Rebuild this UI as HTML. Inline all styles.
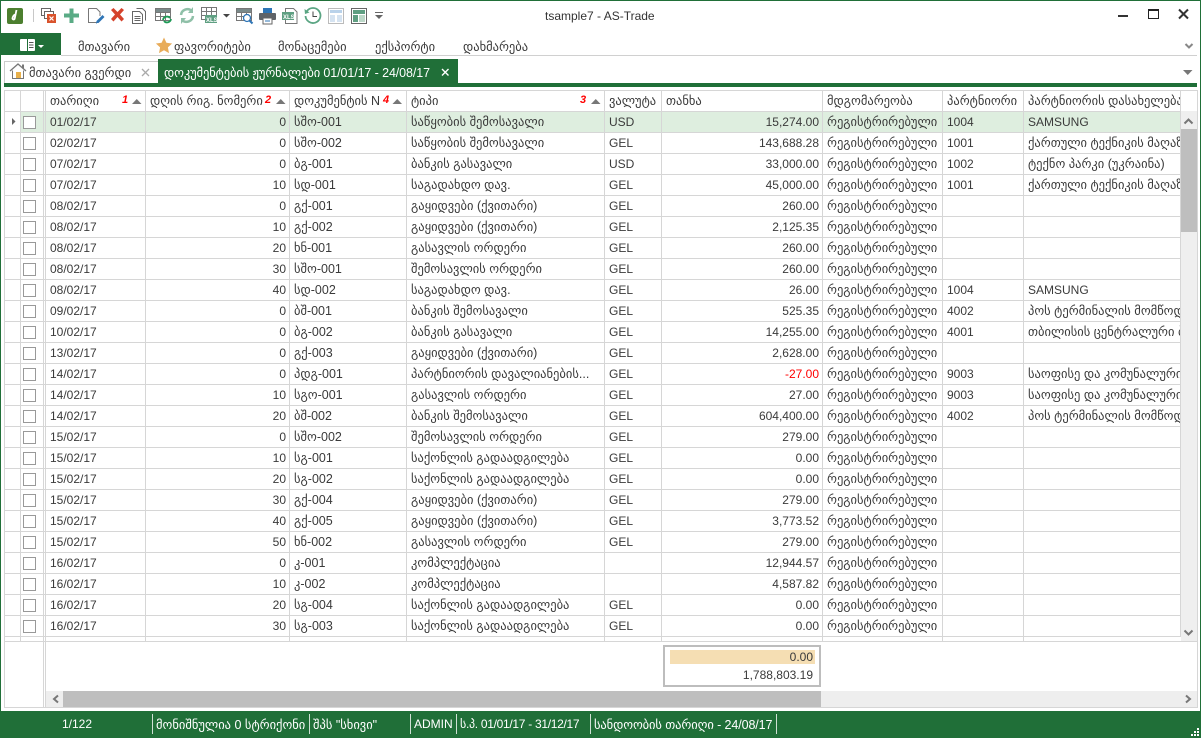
<!DOCTYPE html>
<html><head><meta charset="utf-8"><style>
html,body{margin:0;padding:0;background:#fff}
#r{position:relative;width:1201px;height:738px;overflow:hidden;background:#fff;font:12px "Liberation Sans","DejaVu Sans",sans-serif;color:#3a3a3a}
.a{position:absolute;white-space:nowrap}
.g{background:#206f38}
.ka{font-size:12.5px}
svg{position:absolute;overflow:visible}
table{position:absolute;left:4px;top:90px;border-collapse:separate;border-spacing:0;table-layout:fixed;width:1177px;border-left:1px solid #d6d6d6;border-top:1px solid #d6d6d6}
td{height:20px;padding:0 3px 0 4px;border-right:1px solid #d6d6d6;border-bottom:1px solid #d6d6d6;overflow:hidden;white-space:nowrap;box-sizing:content-box;line-height:20px;font-size:12px}
td.n{text-align:right}
td.d{padding-left:6px;background:linear-gradient(#d6d6d6,#d6d6d6) 1px 0/1px 100% no-repeat}
tr.s td{background-color:#deeedf}
tr.s td:first-child{background:#fff}
.c{display:block;width:11px;height:11px;border:1px solid #999;background:#fff;margin:0 0 0 -2px}
.t{font-size:12.5px}
</style></head><body><div id="r">

<div class="a g" style="left:0;top:0;width:1201px;height:1px"></div>
<div class="a g" style="left:0;top:0;width:1px;height:738px"></div>
<div class="a g" style="left:1200px;top:0;width:1px;height:738px"></div>

<!-- toolbar -->
<svg style="left:0;top:0" width="400" height="32">
<rect x="7" y="8" width="16" height="16" rx="2" fill="#4c7f2f"/>
<path d="M12.500 19c0-2.500 1.500-4.500 3.500-4.500M16.500 10l-1.800 8.500c-.4 1.500-2.400 1.200-2.200-.5" fill="none" stroke="#fff" stroke-width="1.800"/>
<rect x="33" y="9" width="1" height="13" fill="#c8c8c8"/>
<rect x="41.500" y="8.500" width="9" height="7" fill="#fff" stroke="#666"/><rect x="44.500" y="11.500" width="9" height="7" fill="#fff" stroke="#666"/><rect x="47" y="14" width="9" height="9" fill="#d9532c"/><path d="M49.500 16.500l4 4m0-4l-4 4" stroke="#fff" stroke-width="1.200"/>
<path d="M69.500 8.500h4v5h5.500v4h-5.500v5.500h-4v-5.500h-5.500v-4h5.500z" fill="#5aab85"/>
<path d="M88.500 8.500h8l3.500 3.500v4M88.500 8.500v14h8" fill="none" stroke="#777"/><path d="M97 23l-1 1 .5-3 6-6 2 2-6 6z" fill="#2e75b6"/>
<path d="M111 10l2.500-2 4 4 4-4 2.500 2-4 4.500 4 4.500-2.500 2.500-4-4.500-4 4.500-2.500-2.500 4-4.500z" fill="#d5422b"/>
<path d="M136.500 8.500h6l3 3v9M132.500 11.500h7l3 3v9h-10z" fill="#fff" stroke="#666"/><path d="M134.500 16.500h6M134.500 18.500h6M134.500 20.500h6" stroke="#666"/>
<rect x="155.500" y="8.500" width="15" height="12" fill="#fff" stroke="#777"/><path d="M155.500 12.500h15M155.500 16.500h15M160.500 8.500v12M165.500 8.500v12" stroke="#777"/><rect x="156" y="9" width="14" height="3" fill="#7a8a8a"/>
<path d="M163 20a4 4 0 0 1 7-2M171 19a4 4 0 0 1-7 2" fill="none" stroke="#1d9a55" stroke-width="1.800"/>
<path d="M181 15a6.500 6.500 0 0 1 11-4M193 16a6.500 6.500 0 0 1-11 4" fill="none" stroke="#8fc0a8" stroke-width="2.500"/><path d="M193 7v6h-5zM181 24v-6h5z" fill="#8fc0a8"/>
<rect x="201.500" y="7.500" width="15" height="12" fill="#fff" stroke="#777"/><path d="M201.500 11.500h15M201.500 15.500h15M206.500 7.500v12M211.500 7.500v12" stroke="#777"/>
<rect x="205" y="15" width="12" height="8" fill="#5f9f82"/><text x="206" y="22" font-size="6" font-weight="bold" fill="#fff" font-family="Liberation Sans">XLS</text>
<path d="M223 14h7l-3.500 3.500z" fill="#444"/>
<rect x="236.500" y="8.500" width="15" height="12" fill="#fff" stroke="#777"/><path d="M236.500 12.500h15M236.500 16.500h8M241.500 8.500v12M246.500 8.500v6" stroke="#777"/><rect x="237" y="9" width="14" height="3" fill="#7a8a8a"/>
<circle cx="247" cy="18" r="3.500" fill="#fff" stroke="#2e75b6" stroke-width="1.300"/><path d="M249.500 20.500l3 3" stroke="#2e75b6" stroke-width="2"/>
<rect x="263" y="8" width="9" height="5" fill="#2e75b6"/><rect x="259" y="13" width="17" height="7" rx="1" fill="#5f6368"/><rect x="263" y="18" width="9" height="6" fill="#fff" stroke="#666"/><path d="M265 21h5" stroke="#2e75b6"/>
<path d="M285.500 8.500h8l3.500 3.500v11.500h-11.500z" fill="#fff" stroke="#777"/><rect x="282" y="12" width="12" height="8" fill="#5f9f82"/><text x="283" y="19" font-size="6" font-weight="bold" fill="#fff" font-family="Liberation Sans">XLS</text>
<path d="M307 11a7.500 7.500 0 1 1-1.500 5" fill="none" stroke="#5aa583" stroke-width="1.800"/><path d="M304.500 9l.5 5 4.500-1.500z" fill="#5aa583"/><path d="M313 11.500v5h4" fill="none" stroke="#444"/>
<rect x="328.500" y="8.500" width="15" height="15" fill="#fff" stroke="#bbb"/><rect x="330" y="10" width="12" height="3" fill="#b9d2ea"/><rect x="330" y="15" width="5" height="7" fill="#d5e3f1"/><rect x="337" y="15" width="5" height="7" fill="#d5e3f1"/>
<rect x="351.500" y="8.500" width="15" height="15" fill="#fff" stroke="#666"/><rect x="353" y="10" width="12" height="4" fill="#5f9f82"/><rect x="353" y="15" width="5" height="7" fill="#5f9f82"/><rect x="359" y="15" width="6" height="7" fill="#bcd8c8"/>
<path d="M375 12.500h8" stroke="#666"/><path d="M375 15h8l-4 4z" fill="#666"/>
</svg>
<div class="a" style="left:545px;top:9px;font-size:12px;color:#333">tsample7 - AS-Trade</div>
<svg style="left:1100px;top:0" width="100" height="32">
<rect x="18" y="15" width="10" height="2" fill="#333"/>
<path d="M48.500 9.500h10v9h-10z" fill="none" stroke="#222"/><rect x="48" y="9" width="11" height="2" fill="#222"/>
<path d="M79 9.500l9 9m0-9l-9 9" stroke="#333" stroke-width="2"/>
<path d="M85.500 44l3.500 3.500 3.500-3.500" fill="none" stroke="#888" stroke-width="2"/>
</svg>

<!-- menu -->
<div class="a g" style="left:1px;top:33px;width:60px;height:22px"></div>
<svg style="left:0;top:33px" width="70" height="22">
<rect x="20" y="6" width="15" height="12" rx="1" fill="#fff"/><rect x="27" y="6" width="1" height="12" fill="#206f38"/><path d="M29 9.500h4.500M29 12h4.500M29 14.500h4.500" stroke="#555"/>
<path d="M38 12h6l-3 3z" fill="#fff"/>
</svg>
<div class="a ka" style="left:78px;top:39px">მთავარი</div>
<svg style="left:155px;top:37px" width="18" height="18"><path d="M9 .5l2.400 5.300 5.700.7-4.200 3.900 1.100 5.700L9 13.200l-5 2.900 1.100-5.700L.9 6.500l5.700-.7z" fill="#e8ac5a"/></svg>
<div class="a ka" style="left:174px;top:39px">ფავორიტები</div>
<div class="a ka" style="left:278px;top:39px">მონაცემები</div>
<div class="a ka" style="left:375px;top:39px">ექსპორტი</div>
<div class="a ka" style="left:463px;top:39px">დახმარება</div>
<div class="a" style="left:61px;top:55px;width:1136px;height:1px;background:#d0d0d0"></div>

<!-- tabs -->
<div class="a" style="left:4px;top:61px;width:154px;height:22px;border-top:1px solid #ccc;border-left:1px solid #ccc;box-sizing:border-box"></div>
<svg style="left:9px;top:62px" width="18" height="18"><path d="M1 9L9 2l8 7" fill="none" stroke="#777" stroke-width="1.300"/><path d="M3.500 8.500v8h11v-8" fill="#fff" stroke="#777"/><rect x="7" y="10" width="5" height="6" fill="#e8b04a"/><rect x="13" y="2.500" width="2" height="4" fill="#777"/></svg>
<div class="a ka" style="left:29px;top:65px">მთავარი გვერდი</div>
<svg style="left:141px;top:68px" width="9" height="9"><path d="M1 1l7 7m0-7l-7 7" stroke="#aaa" stroke-width="1.300"/></svg>
<div class="a g" style="left:158px;top:59px;width:300px;height:24px"></div>
<div class="a ka" style="left:164px;top:65px;color:#fff;letter-spacing:-.1px">დოკუმენტების ჟურნალები 01/01/17 - 24/08/17</div>
<svg style="left:441px;top:68px" width="9" height="9"><path d="M1 1l6.500 6.500m0-6.500l-6.500 6.500" stroke="#fff" stroke-width="1.400"/></svg>
<div class="a g" style="left:4px;top:83px;width:1193px;height:4px"></div>
<svg style="left:1183px;top:70px" width="10" height="6"><path d="M0 0h9.500l-4.750 5z" fill="#777"/></svg>

<!-- grid -->
<table>
<colgroup><col style="width:16px"><col style="width:23px"><col style="width:102px"><col style="width:144px"><col style="width:117px"><col style="width:198px"><col style="width:57px"><col style="width:161px"><col style="width:120px"><col style="width:81px"><col style="width:157px"></colgroup>
<tr><td></td><td></td><td class="d"><span class="t">თარიღი</span></td><td><span class="t">დღის რიგ. ნომერი</span></td><td><span class="t">დოკუმენტის N</span></td><td><span class="t">ტიპი</span></td><td><span class="t">ვალუტა</span></td><td><span class="t">თანხა</span></td><td><span class="t">მდგომარეობა</span></td><td><span class="t">პარტნიორი</span></td><td><span class="t">პარტნიორის დასახელება</span></td></tr>
<tr class="s"><td></td><td><i class="c"></i></td><td class="d">01/02/17</td><td class="n">0</td><td><span class="t">სშო-001</span></td><td><span class="t">საწყობის შემოსავალი</span></td><td>USD</td><td class="n">15,274.00</td><td><span class="t">რეგისტრირებული</span></td><td>1004</td><td>SAMSUNG</td></tr>
<tr><td></td><td><i class="c"></i></td><td class="d">02/02/17</td><td class="n">0</td><td><span class="t">სშო-002</span></td><td><span class="t">საწყობის შემოსავალი</span></td><td>GEL</td><td class="n">143,688.28</td><td><span class="t">რეგისტრირებული</span></td><td>1001</td><td><span class="t">ქართული ტექნიკის მაღაზია</span></td></tr>
<tr><td></td><td><i class="c"></i></td><td class="d">07/02/17</td><td class="n">0</td><td><span class="t">ბგ-001</span></td><td><span class="t">ბანკის გასავალი</span></td><td>USD</td><td class="n">33,000.00</td><td><span class="t">რეგისტრირებული</span></td><td>1002</td><td><span class="t">ტექნო პარკი (უკრაინა)</span></td></tr>
<tr><td></td><td><i class="c"></i></td><td class="d">07/02/17</td><td class="n">10</td><td><span class="t">სდ-001</span></td><td><span class="t">საგადახდო დავ.</span></td><td>GEL</td><td class="n">45,000.00</td><td><span class="t">რეგისტრირებული</span></td><td>1001</td><td><span class="t">ქართული ტექნიკის მაღაზია</span></td></tr>
<tr><td></td><td><i class="c"></i></td><td class="d">08/02/17</td><td class="n">0</td><td><span class="t">გქ-001</span></td><td><span class="t">გაყიდვები (ქვითარი)</span></td><td>GEL</td><td class="n">260.00</td><td><span class="t">რეგისტრირებული</span></td><td></td><td></td></tr>
<tr><td></td><td><i class="c"></i></td><td class="d">08/02/17</td><td class="n">10</td><td><span class="t">გქ-002</span></td><td><span class="t">გაყიდვები (ქვითარი)</span></td><td>GEL</td><td class="n">2,125.35</td><td><span class="t">რეგისტრირებული</span></td><td></td><td></td></tr>
<tr><td></td><td><i class="c"></i></td><td class="d">08/02/17</td><td class="n">20</td><td><span class="t">ხნ-001</span></td><td><span class="t">გასავლის ორდერი</span></td><td>GEL</td><td class="n">260.00</td><td><span class="t">რეგისტრირებული</span></td><td></td><td></td></tr>
<tr><td></td><td><i class="c"></i></td><td class="d">08/02/17</td><td class="n">30</td><td><span class="t">სშო-001</span></td><td><span class="t">შემოსავლის ორდერი</span></td><td>GEL</td><td class="n">260.00</td><td><span class="t">რეგისტრირებული</span></td><td></td><td></td></tr>
<tr><td></td><td><i class="c"></i></td><td class="d">08/02/17</td><td class="n">40</td><td><span class="t">სდ-002</span></td><td><span class="t">საგადახდო დავ.</span></td><td>GEL</td><td class="n">26.00</td><td><span class="t">რეგისტრირებული</span></td><td>1004</td><td>SAMSUNG</td></tr>
<tr><td></td><td><i class="c"></i></td><td class="d">09/02/17</td><td class="n">0</td><td><span class="t">ბშ-001</span></td><td><span class="t">ბანკის შემოსავალი</span></td><td>GEL</td><td class="n">525.35</td><td><span class="t">რეგისტრირებული</span></td><td>4002</td><td><span class="t">პოს ტერმინალის მომწოდებელი</span></td></tr>
<tr><td></td><td><i class="c"></i></td><td class="d">10/02/17</td><td class="n">0</td><td><span class="t">ბგ-002</span></td><td><span class="t">ბანკის გასავალი</span></td><td>GEL</td><td class="n">14,255.00</td><td><span class="t">რეგისტრირებული</span></td><td>4001</td><td><span class="t">თბილისის ცენტრალური ბანკი</span></td></tr>
<tr><td></td><td><i class="c"></i></td><td class="d">13/02/17</td><td class="n">0</td><td><span class="t">გქ-003</span></td><td><span class="t">გაყიდვები (ქვითარი)</span></td><td>GEL</td><td class="n">2,628.00</td><td><span class="t">რეგისტრირებული</span></td><td></td><td></td></tr>
<tr><td></td><td><i class="c"></i></td><td class="d">14/02/17</td><td class="n">0</td><td><span class="t">პდგ-001</span></td><td><span class="t">პარტნიორის დავალიანების...</span></td><td>GEL</td><td class="n" style="color:#f00">-27.00</td><td><span class="t">რეგისტრირებული</span></td><td>9003</td><td><span class="t">საოფისე და კომუნალური ხარჯი</span></td></tr>
<tr><td></td><td><i class="c"></i></td><td class="d">14/02/17</td><td class="n">10</td><td><span class="t">სგო-001</span></td><td><span class="t">გასავლის ორდერი</span></td><td>GEL</td><td class="n">27.00</td><td><span class="t">რეგისტრირებული</span></td><td>9003</td><td><span class="t">საოფისე და კომუნალური ხარჯი</span></td></tr>
<tr><td></td><td><i class="c"></i></td><td class="d">14/02/17</td><td class="n">20</td><td><span class="t">ბშ-002</span></td><td><span class="t">ბანკის შემოსავალი</span></td><td>GEL</td><td class="n">604,400.00</td><td><span class="t">რეგისტრირებული</span></td><td>4002</td><td><span class="t">პოს ტერმინალის მომწოდებელი</span></td></tr>
<tr><td></td><td><i class="c"></i></td><td class="d">15/02/17</td><td class="n">0</td><td><span class="t">სშო-002</span></td><td><span class="t">შემოსავლის ორდერი</span></td><td>GEL</td><td class="n">279.00</td><td><span class="t">რეგისტრირებული</span></td><td></td><td></td></tr>
<tr><td></td><td><i class="c"></i></td><td class="d">15/02/17</td><td class="n">10</td><td><span class="t">სგ-001</span></td><td><span class="t">საქონლის გადაადგილება</span></td><td>GEL</td><td class="n">0.00</td><td><span class="t">რეგისტრირებული</span></td><td></td><td></td></tr>
<tr><td></td><td><i class="c"></i></td><td class="d">15/02/17</td><td class="n">20</td><td><span class="t">სგ-002</span></td><td><span class="t">საქონლის გადაადგილება</span></td><td>GEL</td><td class="n">0.00</td><td><span class="t">რეგისტრირებული</span></td><td></td><td></td></tr>
<tr><td></td><td><i class="c"></i></td><td class="d">15/02/17</td><td class="n">30</td><td><span class="t">გქ-004</span></td><td><span class="t">გაყიდვები (ქვითარი)</span></td><td>GEL</td><td class="n">279.00</td><td><span class="t">რეგისტრირებული</span></td><td></td><td></td></tr>
<tr><td></td><td><i class="c"></i></td><td class="d">15/02/17</td><td class="n">40</td><td><span class="t">გქ-005</span></td><td><span class="t">გაყიდვები (ქვითარი)</span></td><td>GEL</td><td class="n">3,773.52</td><td><span class="t">რეგისტრირებული</span></td><td></td><td></td></tr>
<tr><td></td><td><i class="c"></i></td><td class="d">15/02/17</td><td class="n">50</td><td><span class="t">ხნ-002</span></td><td><span class="t">გასავლის ორდერი</span></td><td>GEL</td><td class="n">279.00</td><td><span class="t">რეგისტრირებული</span></td><td></td><td></td></tr>
<tr><td></td><td><i class="c"></i></td><td class="d">16/02/17</td><td class="n">0</td><td><span class="t">კ-001</span></td><td><span class="t">კომპლექტაცია</span></td><td></td><td class="n">12,944.57</td><td><span class="t">რეგისტრირებული</span></td><td></td><td></td></tr>
<tr><td></td><td><i class="c"></i></td><td class="d">16/02/17</td><td class="n">10</td><td><span class="t">კ-002</span></td><td><span class="t">კომპლექტაცია</span></td><td></td><td class="n">4,587.82</td><td><span class="t">რეგისტრირებული</span></td><td></td><td></td></tr>
<tr><td></td><td><i class="c"></i></td><td class="d">16/02/17</td><td class="n">20</td><td><span class="t">სგ-004</span></td><td><span class="t">საქონლის გადაადგილება</span></td><td>GEL</td><td class="n">0.00</td><td><span class="t">რეგისტრირებული</span></td><td></td><td></td></tr>
<tr><td></td><td><i class="c"></i></td><td class="d">16/02/17</td><td class="n">30</td><td><span class="t">სგ-003</span></td><td><span class="t">საქონლის გადაადგილება</span></td><td>GEL</td><td class="n">0.00</td><td><span class="t">რეგისტრირებული</span></td><td></td><td></td></tr>
</table>

<!-- header decorations -->
<svg style="left:0;top:91px" width="620" height="40">
<path d="M12 27l3.500 3.500-3.500 3.500z" fill="#666"/>
<path d="M132 13l4.750-5 4.750 5zM276 13l4.750-5 4.750 5zM392.500 13l4.750-5 4.750 5zM591 13l4.750-5 4.750 5z" fill="#777"/>
</svg>
<div class="a" style="left:122px;top:94px;color:#f00;font:italic bold 11px 'Liberation Sans',sans-serif">1</div>
<div class="a" style="left:265px;top:94px;color:#f00;font:italic bold 11px 'Liberation Sans',sans-serif">2</div>
<div class="a" style="left:383px;top:94px;color:#f00;font:italic bold 11px 'Liberation Sans',sans-serif">4</div>
<div class="a" style="left:580px;top:94px;color:#f00;font:italic bold 11px 'Liberation Sans',sans-serif">3</div>

<!-- vertical scrollbar -->
<div class="a" style="left:1181px;top:90px;width:16px;height:1px;background:#d6d6d6"></div>
<div class="a" style="left:1181px;top:111px;width:16px;height:530px;background:#efefef"></div>
<div class="a" style="left:1181px;top:129px;width:16px;height:103px;background:#bebebe"></div>
<svg style="left:1180px;top:111px" width="17" height="530"><path d="M4.500 12.500L8.500 8.500l4 4" fill="none" stroke="#777" stroke-width="2"/><path d="M4.500 519.500l4 4 4-4" fill="none" stroke="#777" stroke-width="2"/></svg>

<!-- below grid -->
<div class="a" style="left:5px;top:641px;width:1192px;height:1px;background:#d6d6d6"></div>
<div class="a" style="left:20px;top:637px;width:1px;height:4px;background:#d6d6d6"></div>
<div class="a" style="left:145px;top:637px;width:1px;height:4px;background:#d6d6d6"></div>
<div class="a" style="left:289px;top:637px;width:1px;height:4px;background:#d6d6d6"></div>
<div class="a" style="left:406px;top:637px;width:1px;height:4px;background:#d6d6d6"></div>
<div class="a" style="left:604px;top:637px;width:1px;height:4px;background:#d6d6d6"></div>
<div class="a" style="left:661px;top:637px;width:1px;height:4px;background:#d6d6d6"></div>
<div class="a" style="left:822px;top:637px;width:1px;height:4px;background:#d6d6d6"></div>
<div class="a" style="left:942px;top:637px;width:1px;height:4px;background:#d6d6d6"></div>
<div class="a" style="left:1023px;top:637px;width:1px;height:4px;background:#d6d6d6"></div>
<div class="a" style="left:4px;top:637px;width:1px;height:71px;background:#d6d6d6"></div>
<div class="a" style="left:43px;top:637px;width:1px;height:71px;background:#d6d6d6"></div>
<div class="a" style="left:45px;top:637px;width:1px;height:71px;background:#d6d6d6"></div>
<div class="a" style="left:1197px;top:90px;width:1px;height:618px;background:#d6d6d6"></div>

<!-- summary -->
<div class="a" style="left:663px;top:645px;width:158px;height:42px;border:2px solid #bdbdbd;box-sizing:border-box;background:#fff"></div>
<div class="a" style="left:670px;top:650px;width:145px;height:14px;background:#f5deb3"></div>
<div class="a" style="left:670px;top:650px;width:143px;text-align:right;line-height:14px">0.00</div>
<div class="a" style="left:670px;top:668px;width:143px;text-align:right;line-height:14px">1,788,803.19</div>

<!-- horizontal scrollbar -->
<div class="a" style="left:46px;top:691px;width:1151px;height:16px;background:#eee"></div>
<div class="a" style="left:63px;top:691px;width:758px;height:16px;background:#bebebe"></div>
<svg style="left:47px;top:691px" width="1150" height="16"><path d="M11 4.500L7 8l4 3.500" fill="none" stroke="#777" stroke-width="2"/><path d="M1139 4.500l4 3.500-4 3.500" fill="none" stroke="#777" stroke-width="2"/></svg>
<div class="a" style="left:4px;top:707px;width:1194px;height:1px;background:#d6d6d6"></div>

<!-- status bar -->
<div class="a g" style="left:0;top:711px;width:1201px;height:27px"></div>
<div class="a" style="left:62px;top:717px;color:#fff">1/122</div>
<div class="a ka" style="left:156px;top:717px;color:#fff">მონიშნულია 0 სტრიქონი</div>
<div class="a ka" style="left:313px;top:717px;color:#fff">შპს "სხივი"</div>
<div class="a" style="left:414px;top:717px;color:#fff">ADMIN</div>
<div class="a" style="left:460px;top:717px;color:#fff;letter-spacing:-.3px">ს.პ. 01/01/17 - 31/12/17</div>
<div class="a ka" style="left:594px;top:717px;color:#fff;letter-spacing:-.1px">სანდოობის თარიღი - 24/08/17</div>
<div class="a" style="left:152px;top:714px;width:1px;height:20px;background:#cfe0d4"></div>
<div class="a" style="left:309px;top:714px;width:1px;height:20px;background:#cfe0d4"></div>
<div class="a" style="left:410px;top:714px;width:1px;height:20px;background:#cfe0d4"></div>
<div class="a" style="left:456px;top:714px;width:1px;height:20px;background:#cfe0d4"></div>
<div class="a" style="left:590px;top:714px;width:1px;height:20px;background:#cfe0d4"></div>
<div class="a" style="left:776px;top:714px;width:1px;height:20px;background:#cfe0d4"></div>
<svg style="left:1190px;top:727px" width="10" height="10"><path d="M7 1h2v2H7zM4 4h2v2H4zM7 4h2v2H7zM1 7h2v2H1zM4 7h2v2H4zM7 7h2v2H7z" fill="#fff"/></svg>

</div></body></html>
